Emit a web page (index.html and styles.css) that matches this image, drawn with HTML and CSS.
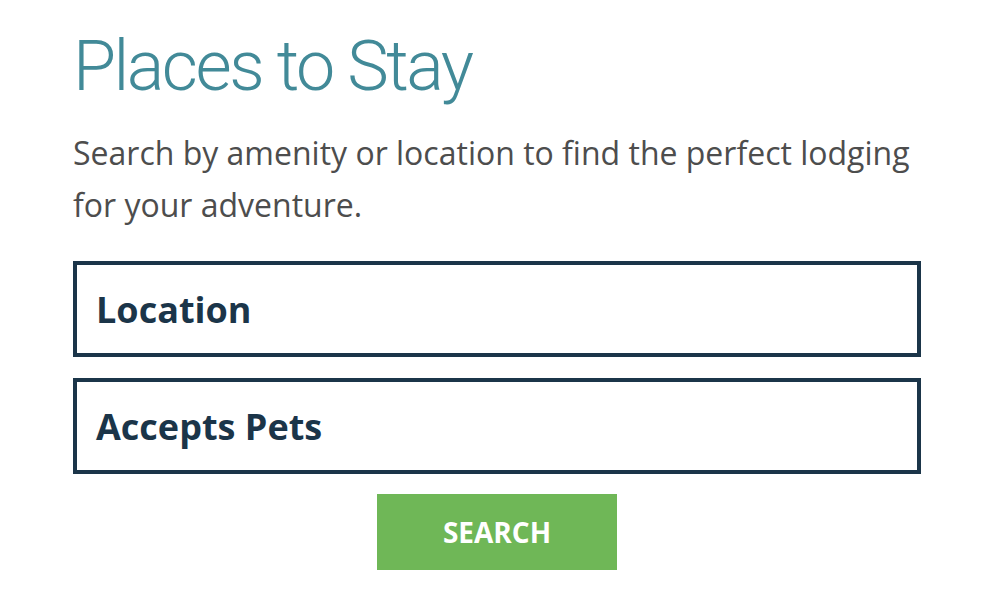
FILE: index.html
```html
<!DOCTYPE html>
<html lang="en">
<head>
    <meta charset="UTF-8">
    <meta name="viewport" content="width=device-width, initial-scale=1.0">
    <title>Places to Stay</title>
    <link rel="stylesheet" href="styles.css">
</head>
<body>

    <div class="stay-search">
        <h1 class="title">Places to Stay</h1>
        <p class="intro">Search by amenity or location to find the perfect lodging for your adventure.</p>

        <!-- Filters -->
        <div class="filter-box">Location</div>
        <div class="filter-box">Accepts Pets</div>

        <div class="actions">
            <button class="search-btn">SEARCH</button>
        </div>
    </div>

</body>
</html>
```

FILE: styles.css
```css
body {
    margin: 0;
    background: #fff;
    font-family: 'Open Sans', sans-serif;
}

.stay-search {
    width: 848px;
    margin-left: 73px;
    padding-top: 24px;
}

.title {
    margin: 0;
    font-family: 'Roboto', sans-serif;
    font-weight: 300;
    font-size: 70px;
    line-height: 84px;
    letter-spacing: -2.5px;
    color: #428a98;
}

.intro {
    margin: 19px 0 0;
    font-size: 32px;
    line-height: 52px;
    color: #4d4d4d;
}

.filter-box {
    height: 88px;
    margin-top: 21px;
    padding-left: 19px;
    border: 4px solid #1b3549;
    display: flex;
    align-items: center;
    font-size: 36px;
    font-weight: 700;
    color: #1b3549;
}

.filter-box:first-of-type {
    margin-top: 30px;
}

.actions {
    display: flex;
    justify-content: center;
    margin-top: 20px;
}

.search-btn {
    width: 240px;
    height: 76px;
    border: none;
    background-color: #6fb757;
    color: #fff;
    font-family: 'Open Sans', sans-serif;
    font-size: 28px;
    font-weight: 700;
    cursor: pointer;
}
```
